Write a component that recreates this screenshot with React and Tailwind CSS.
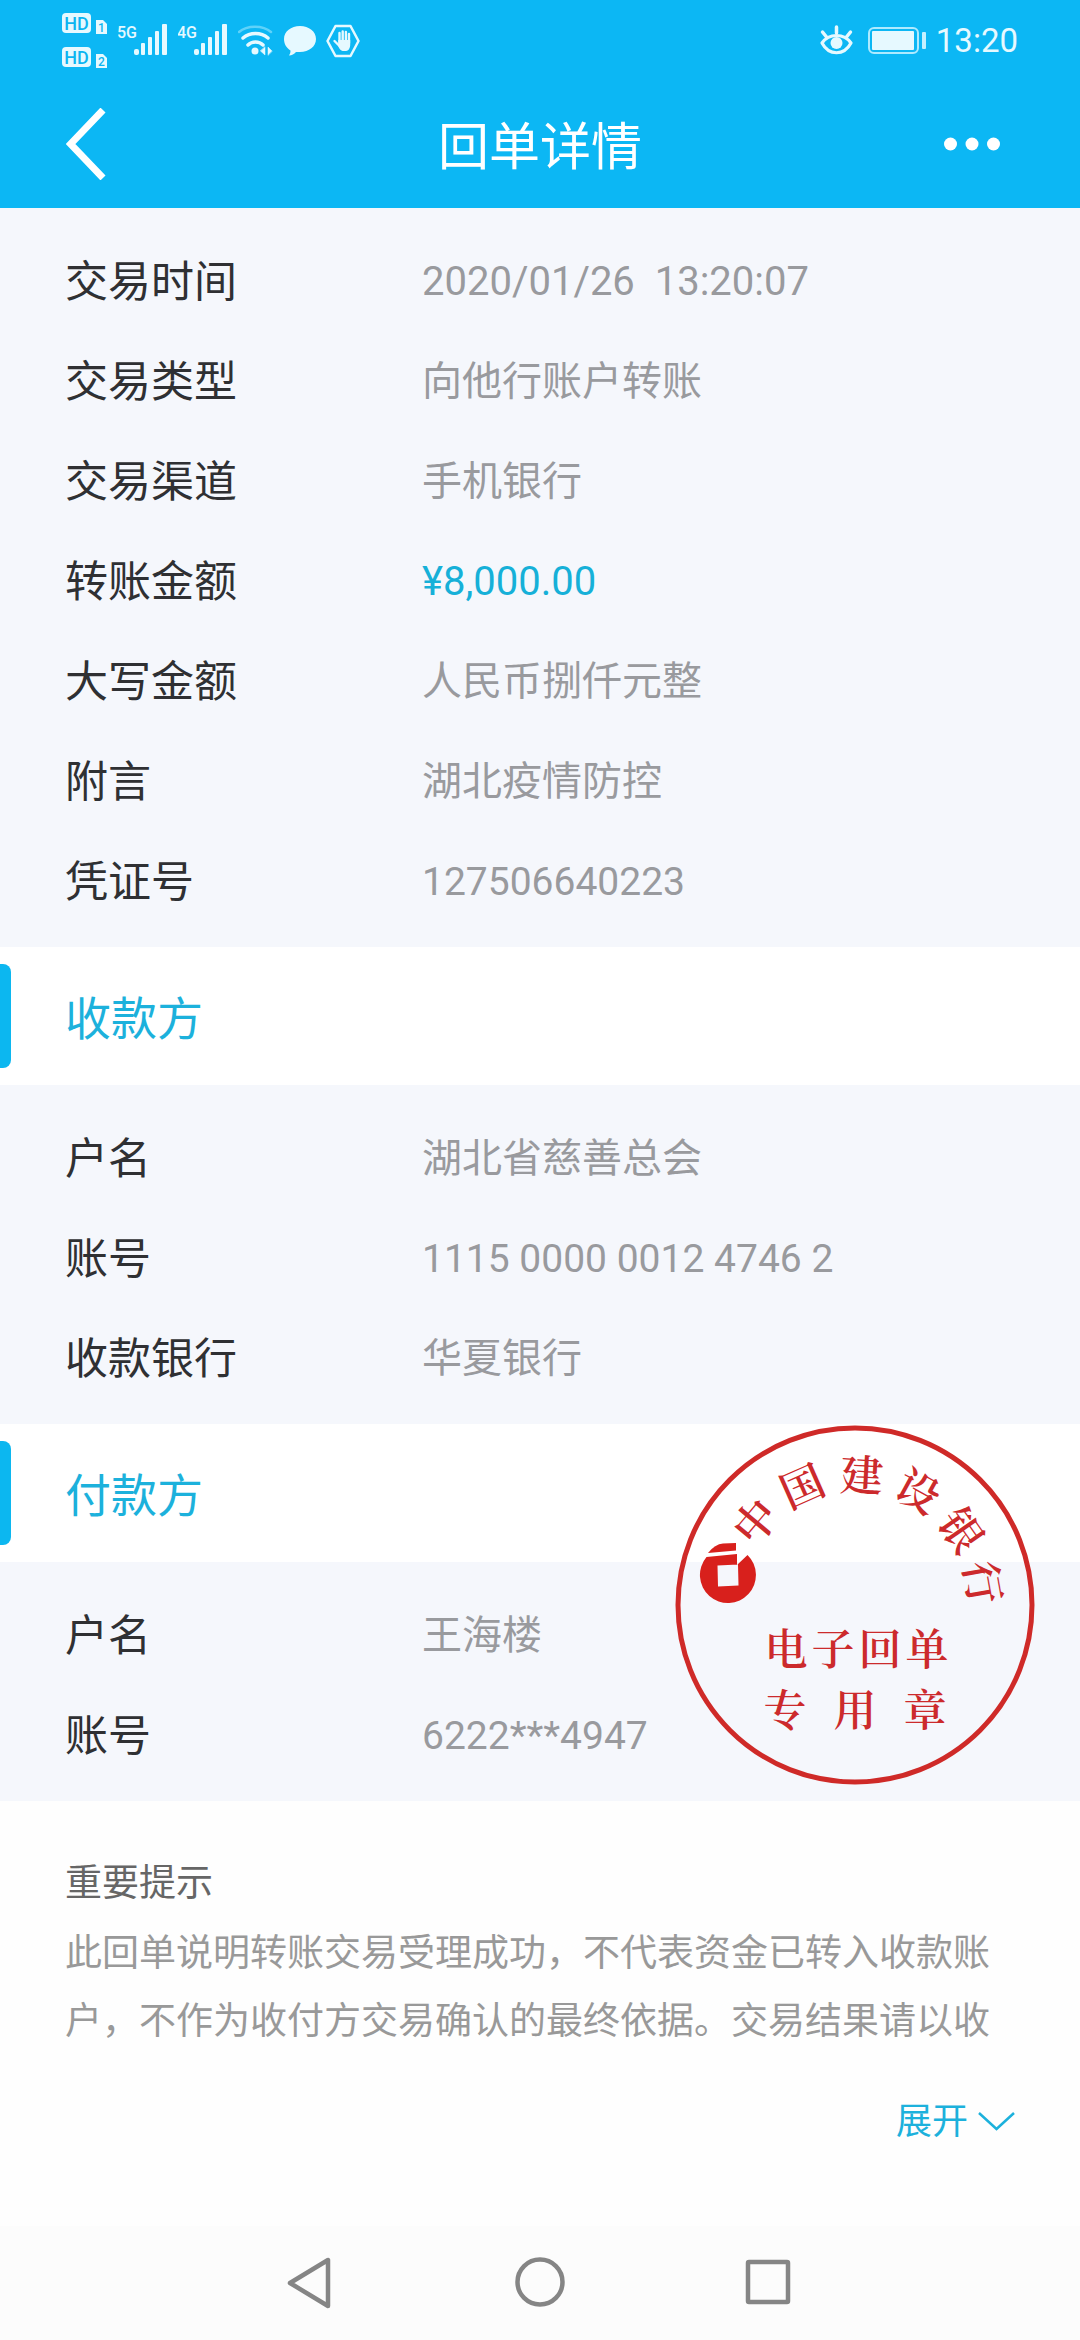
import { useState } from "react";

const transaction = [
  { label: "交易时间", value: "2020/01/26  13:20:07" },
  { label: "交易类型", value: "向他行账户转账" },
  { label: "交易渠道", value: "手机银行" },
  { label: "转账金额", value: "¥8,000.00", highlight: true },
  { label: "大写金额", value: "人民币捌仟元整" },
  { label: "附言", value: "湖北疫情防控" },
  { label: "凭证号", value: "127506640223", number: true },
];

const payee = [
  { label: "户名", value: "湖北省慈善总会" },
  { label: "账号", value: "1115 0000 0012 4746 2", number: true },
  { label: "收款银行", value: "华夏银行" },
];

const payer = [
  { label: "户名", value: "王海楼" },
  { label: "账号", value: "6222***4947", number: true },
];

// Characters along the top arc of the seal, with their angle from 12 o'clock
const sealArc = [
  { char: "中", angle: -50 },
  { char: "国", angle: -24 },
  { char: "建", angle: 3 },
  { char: "设", angle: 29 },
  { char: "银", angle: 55 },
  { char: "行", angle: 80 },
];

function HdIcon() {
  return (
    <svg width="46" height="60" viewBox="0 0 46 60" fill="#0cb5f1" className="font-['Roboto',sans-serif] font-medium">
      <rect x="0" y="3" width="29" height="20" rx="4" fill="#e6f9ff" />
      <text x="14.5" y="19.5" fontSize="18" textAnchor="middle">HD</text>
      <path d="M34 10h7l4 4v10H34z" fill="#e6f9ff" />
      <text x="39.5" y="22" fontSize="12" textAnchor="middle">1</text>
      <rect x="0" y="37" width="29" height="20" rx="4" fill="#e6f9ff" />
      <text x="14.5" y="53.5" fontSize="18" textAnchor="middle">HD</text>
      <path d="M34 44h7l4 4v10H34z" fill="#e6f9ff" />
      <text x="39.5" y="56" fontSize="12" textAnchor="middle">2</text>
    </svg>
  );
}

function SignalIcon({ type }) {
  return (
    <svg width="50" height="60" viewBox="0 0 50 60" fill="#e6f9ff">
      <text x="-1" y="28" fontSize="16" className="font-['Roboto',sans-serif] font-medium">{type}</text>
      <rect x="16" y="39" width="5" height="6" rx="2" />
      <rect x="23" y="33" width="4" height="12" rx="1" />
      <rect x="30" y="27" width="4" height="18" rx="1" />
      <rect x="37" y="21" width="4" height="24" rx="1" />
      <rect x="44" y="14" width="5" height="31" rx="1" />
    </svg>
  );
}

function WifiIcon() {
  return (
    <svg width="36" height="60" viewBox="0 0 36 60" fill="none" strokeLinecap="round">
      <path d="M1 22C9 15 25 15 33 22" stroke="#5fd2f9" strokeWidth="2.5" />
      <path d="M5 28C12 22 23 22 30 28" stroke="#e6f9ff" strokeWidth="3.5" />
      <path d="M10 35C14 31 21 31 25 35" stroke="#e6f9ff" strokeWidth="3.5" />
      <circle cx="17" cy="41" r="3.5" fill="#e6f9ff" />
      <path d="M27 37v8l-4.500-4zM30 45v-8l4 4z" fill="#e6f9ff" stroke="#e6f9ff" strokeWidth="0.5" />
    </svg>
  );
}

function ChatIcon() {
  return (
    <svg width="32" height="60" viewBox="0 0 32 60" fill="#e6f9ff">
      <path d="M16 16c9 0 16 5.500 16 13s-7 13-16 13c-1.500 0-3 0-4 0-2 2-4 3.500-7 3.500 1-1.500 1.500-3 1.500-5C2.500 38 0 34 0 29c0-7.500 7-13 16-13z" />
    </svg>
  );
}

function HandIcon() {
  return (
    <svg width="34" height="60" viewBox="0 0 34 60" fill="none">
      <path d="M9.500 16h15L32.500 31l-8 15h-15L1.500 31z" stroke="#e6f9ff" strokeWidth="2.5" strokeLinejoin="round" />
      <path
        d="M13.500 32V23M16.700 31V21.500M19.900 31V22M23 33V24M8.500 31l5 5"
        stroke="#e6f9ff"
        strokeWidth="2.4"
        strokeLinecap="round"
      />
      <path d="M12.300 30h11.900v5c0 3-2 6-4 6h-3.500c-2 0-4.400-4-4.400-5z" fill="#e6f9ff" />
    </svg>
  );
}

function EyeIcon() {
  return (
    <svg width="34" height="60" viewBox="0 0 34 60" fill="none" stroke="#e6f9ff" strokeWidth="3.5" strokeLinecap="round">
      <path d="M2 33C9 23 24 23 31 33C24 46 9 46 2 33z" strokeWidth="3.2" strokeLinejoin="round" />
      <circle cx="16.5" cy="33" r="6" fill="#e6f9ff" stroke="none" />
      <path d="M16.500 17v6M2.500 22l4 5M30.500 22l-4 5" />
    </svg>
  );
}

function BatteryIcon() {
  return (
    <svg width="58" height="60" viewBox="0 0 58 60" fill="none">
      <rect x="1" y="18" width="49" height="25" rx="5" stroke="#aeeaff" strokeWidth="2" />
      <rect x="4" y="21" width="42" height="19" rx="1" fill="#e6f9ff" />
      <rect x="54" y="22" width="4" height="17" rx="1" fill="#c4f0ff" />
    </svg>
  );
}

function Seal() {
  return (
    <svg
      width="360"
      height="360"
      viewBox="0 0 360 360"
      fill="#cc2a2c"
      className="absolute top-px right-[45px] font-['Noto_Serif_CJK_SC','Noto_Sans_CJK_SC',serif] font-semibold"
    >
      <circle cx="180" cy="180" r="177" fill="none" stroke="#cf2a28" strokeWidth="5" />
      {sealArc.map(({ char, angle }) => (
        <text
          key={char}
          x="180"
          y="66"
          fontSize="43"
          textAnchor="middle"
          transform={`rotate(${angle} 180 180)`}
        >
          {char}
        </text>
      ))}
      <path
        fill="#d8201c"
        fillRule="evenodd"
        d="M72.500 130A28 28 0 1 1 31.500 132L62 129V140zM42.500 140.500L63 139.500L63.500 160.500L43 161.500z"
      />
      <path fill="#d8201c" d="M33 128Q40 119 48 118.500L61 118V125.500z" />
      {["电", "子", "回", "单"].map((char, i) => (
        <text key={char} x={111 + i * 47} y="240" fontSize="43" textAnchor="middle">{char}</text>
      ))}
      {["专", "用", "章"].map((char, i) => (
        <text key={char} x={110 + i * 70} y="301" fontSize="43" textAnchor="middle">{char}</text>
      ))}
    </svg>
  );
}

function DetailList({ rows }) {
  return (
    <dl className="bg-[#f5f7fc] px-[65px] pt-6 pb-[15px]">
      {rows.map((row) => (
        <div key={row.label} className="flex h-[100px] items-center">
          <dt className="w-[357px] shrink-0 text-[43px] text-[#2f3033]">{row.label}</dt>
          <dd
            className={`whitespace-pre ${row.number ? "text-[39px]" : "text-[40px]"} ${
              row.highlight ? "text-[#16b0d8]" : "text-[#999a9e]"
            }`}
          >
            {row.value}
          </dd>
        </div>
      ))}
    </dl>
  );
}

function SectionTitle({ children }) {
  return (
    <div className="flex h-[138px] items-center bg-white">
      <span className="h-[104px] w-[11px] rounded-r-lg bg-[#0cb7f0]"></span>
      <h2 className="pt-[6px] pl-[54px] text-[46px] text-[#1cb1dc]">{children}</h2>
    </div>
  );
}

export default function App() {
  const [expanded, setExpanded] = useState(false);

  return (
    <div className="flex min-h-screen flex-col bg-[#fefefe] font-['Roboto','Noto_Sans_CJK_SC',sans-serif] leading-none">
      <header className="bg-[#0cb7f4] text-white">
        {/* Status bar */}
        <div className="flex h-20 items-center justify-between px-[62px]">
          <div className="flex items-center gap-[10px]">
            <HdIcon />
            <SignalIcon type="5G" />
            <SignalIcon type="4G" />
            <WifiIcon />
            <ChatIcon />
            <HandIcon />
          </div>
          <div className="flex items-center">
            <EyeIcon />
            <div className="mr-[10px] ml-[14px]">
              <BatteryIcon />
            </div>
            <span className="text-[33px] text-[#e6f9ff]">13:20</span>
          </div>
        </div>

        {/* Title bar */}
        <div className="grid h-32 grid-cols-3 items-center px-[66px]">
          <button type="button" aria-label="返回" className="justify-self-start">
            <svg width="40" height="72" viewBox="0 0 40 72" fill="none" stroke="#fff" strokeWidth="7">
              <path d="M37 2L4.500 36L37 70" />
            </svg>
          </button>
          <h1 className="pt-[6px] text-center text-[51px]">回单详情</h1>
          <button type="button" aria-label="更多" className="justify-self-end pr-[14px]">
            <svg width="56" height="14" viewBox="0 0 56 14" fill="#fff">
              <circle cx="6.5" cy="7" r="6.5" />
              <circle cx="28" cy="7" r="6.5" />
              <circle cx="49.5" cy="7" r="6.5" />
            </svg>
          </button>
        </div>
      </header>

      <main>
        <DetailList rows={transaction} />

        <section>
          <SectionTitle>收款方</SectionTitle>
          <DetailList rows={payee} />
        </section>

        <section className="relative">
          <SectionTitle>付款方</SectionTitle>
          <DetailList rows={payer} />
          <Seal />
        </section>

        <section className="px-[65px] pt-16">
          <h3 className="text-[37px] text-[#666]">重要提示</h3>
          <p className="mt-[18px] text-[37px] leading-[68px] text-[#999]">
            此回单说明转账交易受理成功，不代表资金已转入收款账户，不作为收付方交易确认的最终依据。交易结果请以收
          </p>
          <div className="mt-12 flex justify-end">
            <button
              type="button"
              aria-expanded={expanded}
              onClick={() => setExpanded(!expanded)}
              className="flex items-center gap-[10px] text-[36px] text-[#1cb1dc]"
            >
              展开
              <svg width="37" height="20" viewBox="0 0 37 20" fill="none" stroke="#1cb1dc" strokeWidth="2.5">
                <path d="M1 1L18.500 17L36 1" />
              </svg>
            </button>
          </div>
        </section>
      </main>

      {/* System navigation */}
      <nav className="mt-auto flex h-[114px] items-center justify-center gap-[180px] bg-[#fcfcfc]">
        <button type="button" aria-label="后退">
          <svg width="50" height="52" viewBox="0 0 50 52" fill="none" stroke="#858585" strokeWidth="4.5" strokeLinejoin="round">
            <path d="M43 3V49L5 26z" />
          </svg>
        </button>
        <button type="button" aria-label="主页">
          <svg width="50" height="52" viewBox="0 0 50 52" fill="none" stroke="#858585" strokeWidth="4.5">
            <circle cx="25" cy="25" r="22.5" />
          </svg>
        </button>
        <button type="button" aria-label="最近任务">
          <svg width="50" height="52" viewBox="0 0 50 52" fill="none" stroke="#858585" strokeWidth="4.5">
            <rect x="3" y="5" width="40" height="40" rx="1" />
          </svg>
        </button>
      </nav>
    </div>
  );
}
